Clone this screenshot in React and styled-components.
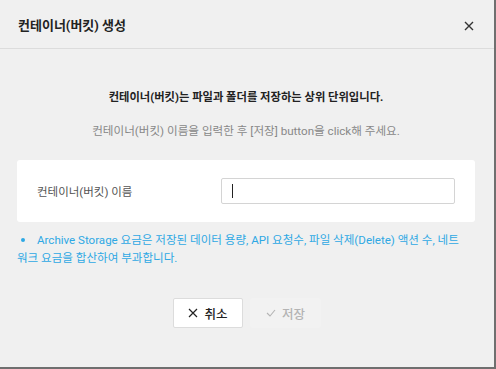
import React from 'react';
import styled, { createGlobalStyle } from 'styled-components';

const GlobalStyle = createGlobalStyle`
  html, body {
    margin: 0;
    padding: 0;
    background: #6f6f6f;
  }
  body {
    font-family: Roboto, "Noto Sans CJK KR", sans-serif;
  }
`;

const Dialog = styled.div`
  width: 494px;
  height: 367px;
  background: #f0f0f0;
  display: flex;
  flex-direction: column;
`;

const Header = styled.div`
  height: 49px;
  box-sizing: border-box;
  border-bottom: 1px solid #dcdcdc;
  display: flex;
  align-items: center;
  justify-content: space-between;
  padding: 0 19px 0 18px;
  h2 {
    margin: 0;
    font-size: 13px;
    font-weight: 700;
    color: #222;
  }
`;

const CloseButton = styled.button`
  border: none;
  background: none;
  padding: 0;
  width: 12px;
  height: 12px;
  margin-top: 4px;
  display: flex;
  align-items: center;
  justify-content: center;
  cursor: pointer;
`;

const Body = styled.div`
  display: flex;
  flex-direction: column;
  padding: 0 19px 0 17px;
`;

const Lead = styled.p`
  margin: 41px 0 0;
  text-align: center;
  font-size: 11.3px;
  font-weight: 700;
  color: #222;
  line-height: 16px;
`;

const Hint = styled.p`
  margin: 17px 0 0;
  text-align: center;
  font-size: 11.6px;
  color: #888;
  line-height: 16px;
`;

const Card = styled.div`
  margin-top: 21px;
  height: 62px;
  background: #fff;
  border-radius: 3px;
  display: grid;
  grid-template-columns: 184px 234px;
  align-items: center;
  padding: 0 20px;
  label {
    font-size: 11.5px;
    color: #555;
  }
`;

const Field = styled.div`
  position: relative;
  height: 26px;
`;

const Input = styled.input`
  width: 100%;
  height: 26px;
  box-sizing: border-box;
  border: 1px solid #d4d4d4;
  border-radius: 2px;
  padding: 0 10px;
  font-size: 12px;
  outline: none;
`;

const Caret = styled.span`
  position: absolute;
  left: 11px;
  top: 6px;
  width: 1px;
  height: 14px;
  background: #222;
  pointer-events: none;
`;

const Notes = styled.ul`
  margin: 9px 0 0;
  padding: 0 12px 0 0;
  list-style: none;
  li {
    font-size: 11.55px;
    line-height: 18px;
    color: #2ea8e4;
    word-break: break-all;
    &::before {
      content: '';
      display: inline-block;
      width: 4px;
      height: 4px;
      border-radius: 50%;
      background: currentColor;
      margin: 0 12px 0 4px;
      vertical-align: middle;
      position: relative;
      top: -1px;
    }
  }
`;

const Footer = styled.div`
  display: flex;
  justify-content: center;
  gap: 7px;
  margin-top: 31px;
  padding-left: 2px;
`;

const Button = styled.button`
  width: ${p => p.$w || 70}px;
  height: 30px;
  box-sizing: border-box;
  border: 1px solid ${p => (p.disabled ? '#f2f2f2' : '#dcdcdc')};
  background: ${p => (p.disabled ? '#f2f2f2' : '#fff')};
  color: ${p => (p.disabled ? '#b4b4b4' : '#222')};
  border-radius: 2px;
  font-family: Roboto, "Noto Sans CJK KR", sans-serif;
  font-size: 12.5px;
  font-weight: 500;
  display: flex;
  align-items: center;
  justify-content: center;
  gap: 6px;
  padding: 0;
`;

const XIcon = ({ size = 10, color = '#222', w = 1.2 }) => (
  <svg width={size} height={size} viewBox="0 0 10 10">
    <path d="M1 1L9 9M9 1L1 9" stroke={color} strokeWidth={w} fill="none" />
  </svg>
);

const CheckIcon = () => (
  <svg width="10" height="8" viewBox="0 0 10 8">
    <path d="M1 4L4 7L9 1" stroke="#b4b4b4" strokeWidth="1.1" fill="none" />
  </svg>
);

export default function App() {
  return (
    <>
      <GlobalStyle />
      <Dialog>
        <Header>
          <h2>컨테이너(버킷) 생성</h2>
          <CloseButton aria-label="close">
            <XIcon size={10} color="#333" w={1.4} />
          </CloseButton>
        </Header>
        <Body>
          <Lead>컨테이너(버킷)는 파일과 폴더를 저장하는 상위 단위입니다.</Lead>
          <Hint>컨테이너(버킷) 이름을 입력한 후 [저장] button을 click해 주세요.</Hint>
          <Card>
            <label>컨테이너(버킷) 이름</label>
            <Field>
              <Input />
              <Caret />
            </Field>
          </Card>
          <Notes>
            <li>Archive Storage 요금은 저장된 데이터 용량, API 요청수, 파일 삭제(Delete) 액션 수, 네트워크 요금을 합산하여 부과합니다.</li>
          </Notes>
          <Footer>
            <Button>
              <XIcon size={10} />
              취소
            </Button>
            <Button $w={71} disabled>
              <CheckIcon />
              저장
            </Button>
          </Footer>
        </Body>
      </Dialog>
    </>
  );
}
